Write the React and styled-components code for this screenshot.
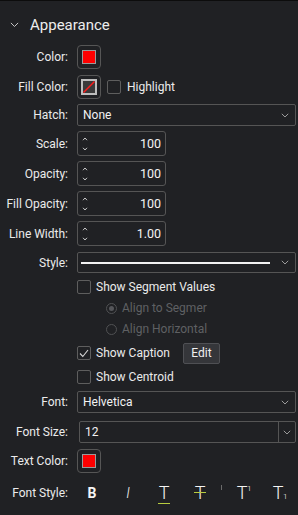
import React from "react";
import styled, { createGlobalStyle } from "styled-components";

const Global = createGlobalStyle`
  html, body { margin: 0; padding: 0; background: #202124; }
  body { font-family: Roboto, "Noto Sans", "Liberation Sans", sans-serif; }
  * { box-sizing: border-box; }
`;

const Panel = styled.div`
  width: 298px;
  height: 515px;
  background: #202124;
  border-top: 1px solid #0c0c0c;
  color: #e6e6e6;
  font-size: 12px;
  display: flex;
  flex-direction: column;
`;

const Header = styled.div`
  height: 44px;
  padding: 4px 0 0 10px;
  display: flex;
  align-items: center;
  gap: 11px;
  font-size: 15px;
  color: #ededed;
`;

const Rows = styled.div`
  display: flex;
  flex-direction: column;
  gap: 5px;
`;

const Row = styled.div`
  display: grid;
  grid-template-columns: 68px 1fr;
  column-gap: 9px;
  align-items: center;
  height: ${(p) => p.$h}px;
  margin-top: ${(p) => p.$mt || 0}px;
  padding-right: 2px;
`;

const Label = styled.div`
  text-align: right;
  white-space: nowrap;
  color: #ebebeb;
`;

const Controls = styled.div`
  display: flex;
  align-items: center;
  gap: ${(p) => p.$gap ?? 6}px;
  height: 100%;
  padding-left: ${(p) => p.$indent || 0}px;
`;

const SwatchBox = styled.div`
  width: 24px;
  height: 24px;
  border: 1px solid #565656;
  border-radius: 4px;
  display: flex;
  align-items: center;
  justify-content: center;
`;

const SwatchInner = styled.div`
  width: 14px;
  height: 14px;
  background: #ff0000;
  border: 1px solid #9a9a9a;
`;

const Select = styled.div`
  flex: 1;
  height: 100%;
  border: 1px solid #555;
  border-radius: 2px;
  display: flex;
  align-items: center;
  padding: 0 6px 0 5px;
  gap: 6px;
  margin-left: ${(p) => p.$ml || 0}px;
`;

const SelectText = styled.span`
  flex: 1;
  color: #f2f2f2;
`;

const LinePreview = styled.span`
  flex: 1;
  height: 2px;
  background: #f2f2f2;
  margin-left: -2px;
  margin-right: 5px;
`;

const ComboArrow = styled.div`
  width: 17px;
  align-self: stretch;
  border-left: 1px solid #555;
  display: flex;
  align-items: center;
  justify-content: center;
  margin-right: -6px;
`;

const Spin = styled.div`
  width: 89px;
  height: 100%;
  border: 1px solid #555;
  border-radius: 3px;
  display: flex;
  align-items: center;
  padding: 0 4px 0 4px;
`;

const SpinArrows = styled.div`
  display: flex;
  flex-direction: column;
  justify-content: space-between;
  height: 14px;
`;

const SpinValue = styled.span`
  flex: 1;
  text-align: right;
  font-size: 12.5px;
  color: #f4f4f4;
`;

const Box = styled.div`
  width: 14px;
  height: 14px;
  border: 1px solid #5e5e5e;
  border-radius: 2px;
  display: flex;
  align-items: center;
  justify-content: center;
  flex-shrink: 0;
`;

const CheckText = styled.span`
  color: ${(p) => (p.$dim ? "#5f6063" : "#ebebeb")};
  white-space: nowrap;
`;

const Radio = styled.div`
  width: 11px;
  height: 11px;
  border: 1px solid #505153;
  border-radius: 50%;
  display: flex;
  align-items: center;
  justify-content: center;
  flex-shrink: 0;
`;

const RadioDot = styled.div`
  width: 5px;
  height: 5px;
  border-radius: 50%;
  background: #55565a;
`;

const Button = styled.div`
  width: 37px;
  height: 21px;
  margin-left: 8px;
  background: #35363a;
  border: 1px solid #4f5054;
  border-radius: 2px;
  display: flex;
  align-items: center;
  justify-content: center;
  color: #f0f0f0;
`;

const StyleBar = styled.div`
  display: flex;
  align-items: center;
  height: 100%;
  margin-left: -3px;
  position: relative;
`;

const StyleBtn = styled.div`
  width: 36px;
  display: flex;
  justify-content: center;
  align-items: center;
  color: #f4f4f4;
  font-size: ${(p) => p.$size || 18}px;
  font-weight: ${(p) => (p.$bold ? 700 : 300)};
  font-style: ${(p) => (p.$italic ? "italic" : "normal")};
  line-height: 1;
`;

const Spacer = styled.div`
  width: 6px;
`;

const Glyph = styled.span`
  position: relative;
  display: inline-block;
`;

const UnderMark = styled.span`
  position: absolute;
  left: -1px;
  right: -1px;
  bottom: -2px;
  height: 1px;
  background: #b7cc3f;
`;

const StrikeMark = styled.span`
  position: absolute;
  left: -1px;
  right: -1px;
  top: 8px;
  height: 1px;
  background: #b7cc3f;
`;

const Script = styled.span`
  font-size: 8px;
  position: absolute;
  right: -4px;
  ${(p) => (p.$sub ? "bottom: 1px;" : "top: 1px;")}
`;

const Tick = styled.span`
  position: absolute;
  left: 147px;
  top: 2px;
  width: 1px;
  height: 5px;
  background: #6b6b6b;
`;

const Chevron = ({ size = 8, color = "#aeaeae" }) => (
  <svg width={size} height={size * 0.6} viewBox="0 0 10 6" fill="none">
    <path d="M1 1 L5 5 L9 1" stroke={color} strokeWidth="1.1" />
  </svg>
);

const SpinUp = () => (
  <svg width="6" height="4" viewBox="0 0 6 4"><path d="M1 3.2 L3 1 L5 3.2" stroke="#c8c8c8" fill="none" strokeWidth="1" /></svg>
);
const SpinDown = () => (
  <svg width="6" height="4" viewBox="0 0 6 4"><path d="M1 0.8 L3 3 L5 0.8" stroke="#c8c8c8" fill="none" strokeWidth="1" /></svg>
);

const NoFill = () => (
  <svg width="16" height="16" viewBox="0 0 16 16">
    <rect x="1" y="1" width="14" height="14" fill="#3a3a3a" stroke="#bdbdbd" strokeWidth="2" />
    <path d="M2.5 13.5 L13.5 2.5" stroke="#ff1a1a" strokeWidth="1.4" />
  </svg>
);

const Check = () => (
  <svg width="10" height="9" viewBox="0 0 10 9"><path d="M1 4.5 L3.8 7.5 L9 1" stroke="#d6d6d6" fill="none" strokeWidth="1.1" /></svg>
);

const Swatch = () => (
  <SwatchBox><SwatchInner /></SwatchBox>
);

const SpinRow = ({ label, value }) => (
  <Row $h={25}>
    <Label>{label}</Label>
    <Controls>
      <Spin>
        <SpinArrows><SpinUp /><SpinDown /></SpinArrows>
        <SpinValue>{value}</SpinValue>
      </Spin>
    </Controls>
  </Row>
);

export default function App() {
  return (
    <>
      <Global />
      <Panel>
        <Header>
          <Chevron size={9} color="#c8c8c8" />
          <span>Appearance</span>
        </Header>
        <Rows>
          <Row $h={24}>
            <Label>Color:</Label>
            <Controls><Swatch /></Controls>
          </Row>
          <Row $h={25}>
            <Label>Fill Color:</Label>
            <Controls>
              <SwatchBox><NoFill /></SwatchBox>
              <Box />
              <CheckText>Highlight</CheckText>
            </Controls>
          </Row>
          <Row $h={22}>
            <Label>Hatch:</Label>
            <Controls>
              <Select><SelectText>None</SelectText><Chevron /></Select>
            </Controls>
          </Row>
          <SpinRow label="Scale:" value="100" />
          <SpinRow label="Opacity:" value="100" />
          <SpinRow label="Fill Opacity:" value="100" />
          <SpinRow label="Line Width:" value="1.00" />
          <Row $h={21} $mt={1}>
            <Label>Style:</Label>
            <Controls>
              <Select><LinePreview /><Chevron /></Select>
            </Controls>
          </Row>
          <Row $h={16} $mt={1}>
            <Label />
            <Controls $gap={5}>
              <Box />
              <CheckText>Show Segment Values</CheckText>
            </Controls>
          </Row>
          <Row $h={16}>
            <Label />
            <Controls $gap={5} $indent={29}>
              <Radio><RadioDot /></Radio>
              <CheckText $dim>Align to Segmer</CheckText>
            </Controls>
          </Row>
          <Row $h={16}>
            <Label />
            <Controls $gap={5} $indent={29}>
              <Radio />
              <CheckText $dim>Align Horizontal</CheckText>
            </Controls>
          </Row>
          <Row $h={22}>
            <Label />
            <Controls $gap={5}>
              <Box><Check /></Box>
              <CheckText>Show Caption</CheckText>
              <Button>Edit</Button>
            </Controls>
          </Row>
          <Row $h={16}>
            <Label />
            <Controls $gap={5}>
              <Box />
              <CheckText>Show Centroid</CheckText>
            </Controls>
          </Row>
          <Row $h={22} $mt={1}>
            <Label>Font:</Label>
            <Controls>
              <Select><SelectText>Helvetica</SelectText><Chevron /></Select>
            </Controls>
          </Row>
          <Row $h={22} $mt={3}>
            <Label>Font Size:</Label>
            <Controls>
              <Select $ml={2}>
                <SelectText>12</SelectText>
                <ComboArrow><Chevron /></ComboArrow>
              </Select>
            </Controls>
          </Row>
          <Row $h={25}>
            <Label>Text Color:</Label>
            <Controls><Swatch /></Controls>
          </Row>
          <Row $h={20} $mt={5}>
            <Label>Font Style:</Label>
            <StyleBar>
              <StyleBtn $bold $size={14}>B</StyleBtn>
              <StyleBtn $italic $size={14}>I</StyleBtn>
              <StyleBtn><Glyph>T<UnderMark /></Glyph></StyleBtn>
              <StyleBtn><Glyph>T<StrikeMark /></Glyph></StyleBtn>
              <Tick />
              <Spacer />
              <StyleBtn><Glyph>T<Script>1</Script></Glyph></StyleBtn>
              <StyleBtn><Glyph>T<Script $sub>1</Script></Glyph></StyleBtn>
            </StyleBar>
          </Row>
        </Rows>
      </Panel>
    </>
  );
}
